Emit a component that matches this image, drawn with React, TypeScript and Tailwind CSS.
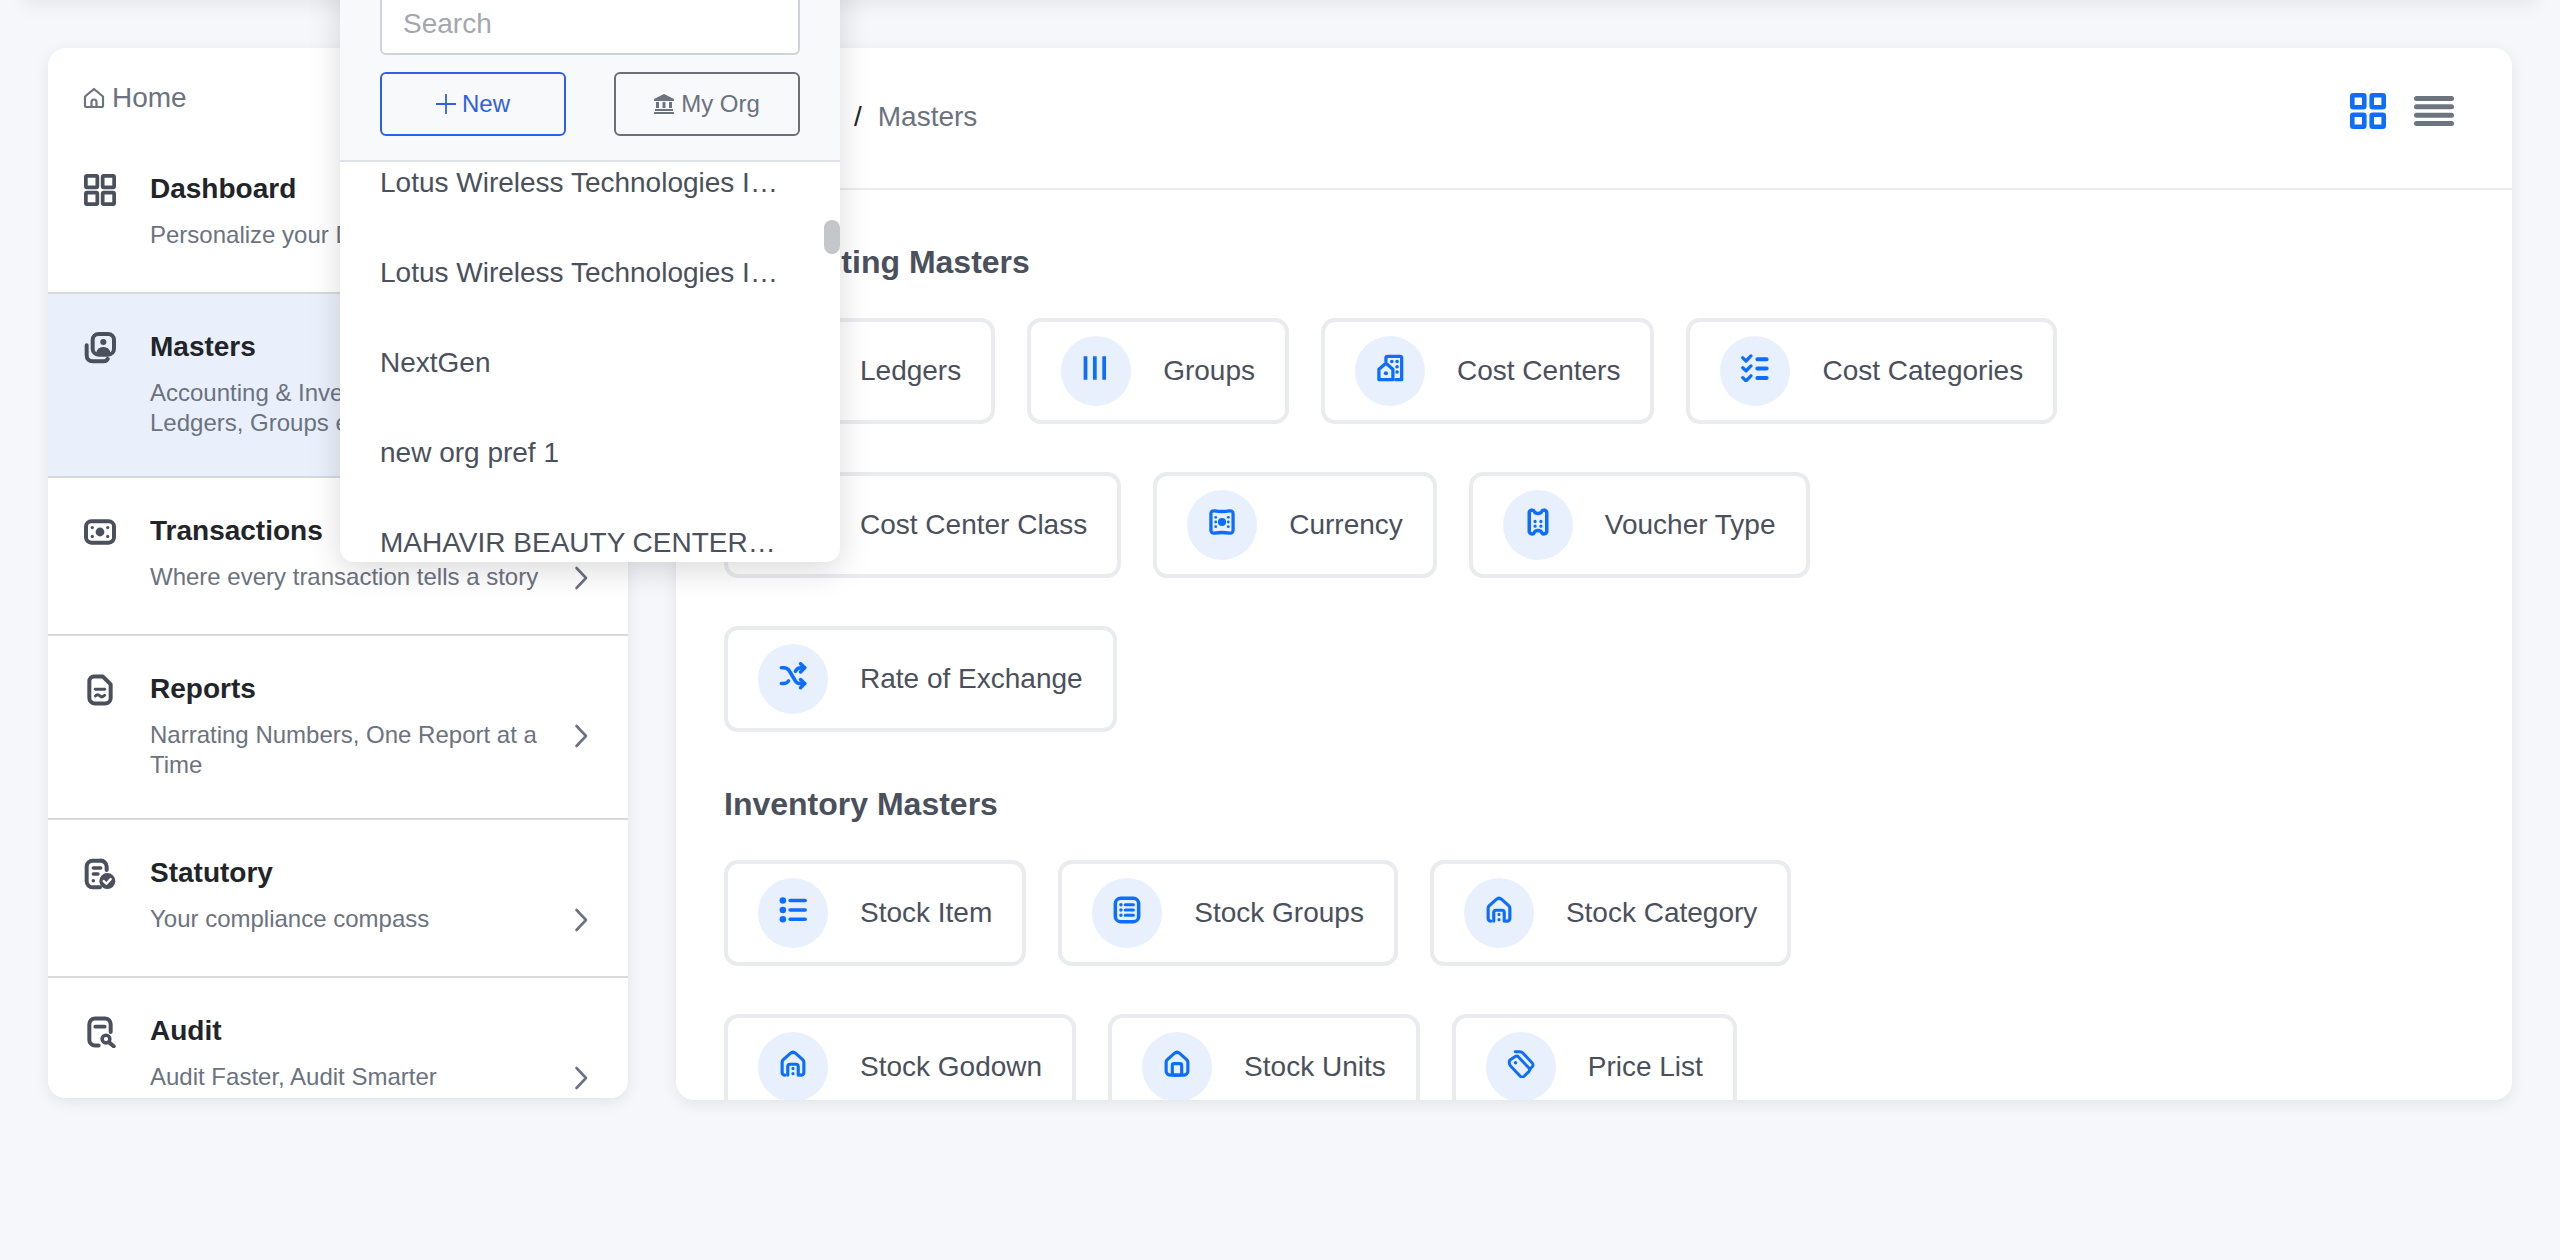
import React from "react";

const F = { fontFamily: '"Liberation Sans", Arial, sans-serif' };

function Svg({ children, cls }: { children: React.ReactNode; cls: string }) {
  return (
    <svg viewBox="0 0 24 24" fill="none" stroke="currentColor" strokeWidth="2" strokeLinecap="round" strokeLinejoin="round" className={cls}>
      {children}
    </svg>
  );
}

const GridIcon = () => (
  <>
    <rect x="1.400" y="1.400" width="8.600" height="8.600" rx="0.800" strokeWidth="2.800" />
    <rect x="14" y="1.400" width="8.600" height="8.600" rx="0.800" strokeWidth="2.800" />
    <rect x="1.400" y="14" width="8.600" height="8.600" rx="0.800" strokeWidth="2.800" />
    <rect x="14" y="14" width="8.600" height="8.600" rx="0.800" strokeWidth="2.800" />
  </>
);

const MastersIcon = () => (
  <>
    <rect x="6.500" y="1.500" width="16" height="15.500" rx="4.500" strokeWidth="3" />
    <circle cx="14.500" cy="7.500" r="2.300" fill="currentColor" stroke="none" />
    <path d="M9.500 16c.6-3 2.700-4.300 5-4.300s4.400 1.300 5 4.300" fill="currentColor" stroke="currentColor" strokeWidth="1" />
    <path d="M2 10v7.500c0 2.800 2 4.500 4.500 4.500h8c1.500 0 2.700-.6 3.300-1.800" strokeWidth="3" />
  </>
);

const CashIcon = () => (
  <>
    <rect x="1.500" y="4" width="21" height="16" rx="4" strokeWidth="3" />
    <circle cx="12" cy="12" r="3.300" fill="currentColor" stroke="none" />
    <circle cx="6.200" cy="8.700" r="1.200" fill="currentColor" stroke="none" />
    <circle cx="6.200" cy="15.300" r="1.200" fill="currentColor" stroke="none" />
    <circle cx="17.800" cy="8.700" r="1.200" fill="currentColor" stroke="none" />
    <circle cx="17.800" cy="15.300" r="1.200" fill="currentColor" stroke="none" />
  </>
);

const ReportIcon = () => (
  <>
    <path d="M7.500 1.800H14l6 6V18a4.200 4.200 0 0 1-4.200 4.200H8.200A4.200 4.200 0 0 1 4 18V5.500a3.700 3.700 0 0 1 3.500-3.700z" strokeWidth="3" />
    <path d="M8.500 11.500h7" strokeWidth="2.200" />
    <path d="M8.500 16.500c1.500-1.500 2.500-1 3.500 0s2 1 3.500-.5" strokeWidth="2.200" />
  </>
);

const StatutoryIcon = () => (
  <>
    <path d="M12 22H6.500A4.500 4.500 0 0 1 2 17.500V6.500A4.500 4.500 0 0 1 6.500 2h5.500A4.500 4.500 0 0 1 17 6.500V9" strokeWidth="3" />
    <path d="M7 7.500h5.500M7 12h3.500" strokeWidth="2.600" />
    <circle cx="7" cy="17" r="1.300" fill="currentColor" stroke="none" />
    <circle cx="17.500" cy="17.300" r="6" fill="currentColor" stroke="none" />
    <path d="M14.800 17.300l2 2 3.200-3.500" stroke="#fff" strokeWidth="1.800" />
  </>
);

const AuditIcon = () => (
  <>
    <path d="M11 22.200H8.200A4.200 4.200 0 0 1 4 18V6a4.200 4.200 0 0 1 4.200-4.200h7.600A4.200 4.200 0 0 1 20 6v6" strokeWidth="3" />
    <path d="M8.500 8h7" strokeWidth="2.800" />
    <circle cx="16.500" cy="17.300" r="2.900" strokeWidth="2.600" />
    <path d="M19 20l3.300 2.700" strokeWidth="3" />
  </>
);

const HouseDoor = () => (
  <>
    <path d="M5 21.500a2.300 2.300 0 0 1-2.300-2.300v-8.700c0-1 .4-1.700 1-2.300l6-5.300c1.300-1.100 3.300-1.100 4.600 0l6 5.300c.6.600 1 1.300 1 2.300v8.700a2.300 2.300 0 0 1-2.300 2.300h-1" strokeWidth="2.700" />
    <path d="M7.500 21.500v-7.300a2 2 0 0 1 2-2h5a2 2 0 0 1 2 2v7.300" strokeWidth="2.700" />
    <path d="M12 15.800v.1M12 20.200v.1" strokeWidth="2.700" />
  </>
);

const HouseBox = () => (
  <>
    <path d="M2.700 18.200v-7.700c0-1 .4-1.700 1-2.300l6-5.300c1.300-1.100 3.300-1.100 4.600 0l6 5.300c.6.600 1 1.300 1 2.300v7.700a3.300 3.300 0 0 1-3.300 3.300H6a3.300 3.300 0 0 1-3.300-3.300z" strokeWidth="2.700" />
    <rect x="8" y="11.700" width="8" height="9.800" rx="1.500" strokeWidth="2.700" />
  </>
);

const icons: Record<string, React.ReactNode> = {
  groups: <path d="M3 2v20M11 2v20M19 2v20" strokeWidth="3.200" strokeLinecap="butt" />,
  centers: (
    <>
      <path d="M8.500 6V3.500A1.500 1.500 0 0 1 10 2h10.500A1.500 1.500 0 0 1 22 3.500V22h-5" strokeWidth="2.800" />
      <path d="M2.500 13L8.500 8l6 5v9h-12z" strokeWidth="2.800" />
      <circle cx="8.500" cy="16.500" r="1.800" fill="currentColor" stroke="none" />
      <path d="M13.500 6.500h.1M18 6.500h.1M18 11h.1M18 15.500h.1" strokeWidth="3" />
    </>
  ),
  categories: (
    <>
      <path d="M1.500 3.300l2.800 2.700 4.200-4.300M1.500 11.800l2.800 2.700 4.200-4.300M1.500 20.300L4.300 23l4.200-4.300" strokeWidth="2.800" />
      <path d="M14 4.500h8M14 12.500h8M14 20.500h8" strokeWidth="3.400" />
    </>
  ),
  currency: (
    <>
      <path d="M2.500 5c0-1.800 1.200-2.800 3-2.500 4.500.7 8.500.7 13 0 1.800-.3 3 .7 3 2.500v14c0 1.800-1.200 2.800-3 2.500-4.500-.7-8.500-.7-13 0-1.800.3-3-.7-3-2.500z" strokeWidth="2.800" />
      <circle cx="12" cy="12" r="3.500" fill="currentColor" stroke="none" />
      <circle cx="6.600" cy="8" r="1.200" fill="currentColor" stroke="none" />
      <circle cx="6.600" cy="12" r="1.200" fill="currentColor" stroke="none" />
      <circle cx="6.600" cy="16" r="1.200" fill="currentColor" stroke="none" />
      <circle cx="17.400" cy="8" r="1.200" fill="currentColor" stroke="none" />
      <circle cx="17.400" cy="12" r="1.200" fill="currentColor" stroke="none" />
      <circle cx="17.400" cy="16" r="1.200" fill="currentColor" stroke="none" />
    </>
  ),
  voucher: (
    <>
      <path d="M4.500 5a2.600 2.600 0 0 1 2.600-3.300c.9 0 1.400.6 1.700 1.300.5 1 1.700 1.700 3.200 1.700s2.700-.7 3.200-1.700c.3-.7.800-1.300 1.700-1.300A2.600 2.600 0 0 1 19.500 5v14a2.600 2.600 0 0 1-2.600 3.300c-.9 0-1.400-.6-1.700-1.300-.5-1-1.700-1.700-3.200-1.700s-2.700.7-3.200 1.700c-.3.700-.8 1.300-1.700 1.300A2.600 2.600 0 0 1 4.500 19z" strokeWidth="3" />
      <path d="M9.500 11.500v.1M14.500 11.500v.1M9.500 15.500v.1M14.500 15.500v.1" strokeWidth="2.800" />
    </>
  ),
  rate: (
    <>
      <path d="M2 5h2c2.200 0 3.800 1 4.800 2.500l5.400 9c1 1.500 2 2 4 2H22" strokeWidth="3" />
      <path d="M2 18.500h2c2.200 0 3.200-.8 4.200-2.300M14 8c1-1.800 2.200-3 4.500-3H22" strokeWidth="3" />
      <path d="M18.500 1.500L22 5l-3.500 3.500M18.500 15L22 18.500 18.500 22" strokeWidth="3" />
    </>
  ),
  item: (
    <>
      <circle cx="3.300" cy="3.800" r="2.800" fill="currentColor" stroke="none" />
      <circle cx="3.300" cy="12" r="2.800" fill="currentColor" stroke="none" />
      <circle cx="3.300" cy="20" r="2.800" fill="currentColor" stroke="none" />
      <path d="M9.500 3.800h13M9.500 12h13M9.500 20h13" strokeWidth="3" />
    </>
  ),
  sgroups: (
    <>
      <rect x="2" y="2" width="20" height="20" rx="4.500" strokeWidth="3" />
      <path d="M10.500 7.500h7M10.500 12h7M10.500 16.500h7" strokeWidth="2.600" />
      <path d="M6.800 7.500v.1M6.800 12v.1M6.800 16.500v.1" strokeWidth="3" />
    </>
  ),
  door: <HouseDoor />,
  box: <HouseBox />,
  tag: (
    <>
      <path d="M2.300 8.800L7 5.600c1-.6 2-.5 2.800.3l9 9.500c.8.900.8 2 .1 2.900l-4.300 4.200c-1 .9-2.300.9-3.200 0l-8.500-9c-1-1.400-1-3.600-.6-4.700z" strokeWidth="2.500" />
      <path d="M7 1.500h4c1 0 1.900.4 2.600 1.100l8 8.500c.8 1 .8 2.400 0 3.300L20 16" strokeWidth="2.500" />
      <circle cx="7.300" cy="11" r="1.500" fill="currentColor" stroke="none" />
    </>
  ),
  ledger: <path d="M5 2h14v20H5z" />,
  cls: <path d="M5 2h14v20H5z" />,
};

function Row({ icon, title, lines, active, last }: { icon: React.ReactNode; title: string; lines: string; active?: boolean; last?: boolean }) {
  return (
    <div className={`flex min-h-[158px] shrink-0 pl-[36px] pr-[40px] pt-[32px] pb-[38px] ${last ? "" : "border-b-2 border-[#d9d9d9]"} ${active ? "bg-[#e9f0fb]" : "bg-white"}`}>
      <div className="w-[66px] shrink-0 pt-[6px] text-[#4a505c]">{icon}</div>
      <div className="flex-1 flex flex-col">
        <div className="h-[42px] leading-[42px] text-[28px] font-bold text-[#212529]">{title}</div>
        <div className="flex items-start justify-between mt-[10px]">
          <div className="w-[396px] text-[24px] leading-[30px] text-[#6b7280]">{lines}</div>
          <svg viewBox="0 0 14 24" fill="none" stroke="#6b7280" strokeWidth="2.600" strokeLinecap="round" strokeLinejoin="round" className="w-[14px] h-[24px] mt-[4px]">
            <path d="M2.500 2l9.500 10-9.500 10" />
          </svg>
        </div>
      </div>
    </div>
  );
}

function Card({ icon, label }: { icon: string; label: string }) {
  return (
    <div className="flex items-center h-[106px] border-4 border-[#e9ebee] rounded-[14px] bg-white pl-[30px] pr-[30px]">
      <div className="w-[70px] h-[70px] rounded-full bg-[#e8effd] flex items-center justify-center text-[#0d6efd]">
        <Svg cls="w-[28px] h-[28px] -mt-[6px]">{icons[icon]}</Svg>
      </div>
      <div className="ml-[32px] text-[28px] leading-[40px] text-[#4a505c] whitespace-nowrap">{label}</div>
    </div>
  );
}

export default function App() {
  return (
    <div style={F} className="relative h-[1260px] w-[2560px] overflow-hidden bg-[#f6f7fb]">
      <div className="absolute left-[24px] right-[24px] -top-[20px] h-[20px] shadow-[0_4px_20px_rgba(0,0,0,0.08)]" />

      <div className="flex gap-[48px] px-[48px] pt-[48px]">
        <aside className="w-[580px] h-[1050px] shrink-0 bg-white rounded-[18px] shadow-[0_4px_16px_rgba(0,0,0,0.08)] overflow-hidden flex flex-col">
          <div className="h-[88px] shrink-0 flex items-center pl-[34px] pt-[12px] text-[28px] text-[#6b7280]">
            <Svg cls="w-[24px] h-[24px] mr-[6px]">
              <path d="M3 20V10.500L12 3l9 7.500V20a1 1 0 0 1-1 1H4a1 1 0 0 1-1-1z" strokeWidth="2.200" />
              <path d="M9.500 21v-5a2.500 2.500 0 0 1 5 0v5" strokeWidth="2.200" />
            </Svg>
            Home
          </div>
          <Row icon={<Svg cls="w-[32px] h-[32px]"><GridIcon /></Svg>} title="Dashboard" lines="Personalize your Dashboard" />
          <Row active icon={<Svg cls="w-[32px] h-[32px]"><MastersIcon /></Svg>} title="Masters" lines="Accounting & Inventory Masters Ledgers, Groups etc" />
          <Row icon={<Svg cls="w-[32px] h-[32px]"><CashIcon /></Svg>} title="Transactions" lines="Where every transaction tells a story" />
          <Row icon={<Svg cls="w-[32px] h-[32px]"><ReportIcon /></Svg>} title="Reports" lines="Narrating Numbers, One Report at a Time" />
          <Row icon={<Svg cls="w-[32px] h-[32px]"><StatutoryIcon /></Svg>} title="Statutory" lines="Your compliance compass" />
          <Row last icon={<Svg cls="w-[32px] h-[32px]"><AuditIcon /></Svg>} title="Audit" lines="Audit Faster, Audit Smarter" />
        </aside>

        <main className="flex-1 h-[1052px] bg-white rounded-[18px] shadow-[0_4px_16px_rgba(0,0,0,0.08)] overflow-hidden flex flex-col">
          <div className="h-[142px] shrink-0 border-b-2 border-[#e9ebee] flex items-center justify-between pl-[48px] pr-[58px]">
            <div className="flex items-center text-[28px] text-[#6b7280] -mt-[2px]">
              <span className="w-[130px]">Home</span>
              <span className="text-[#212529] mr-[16px]">/</span>
              <span>Masters</span>
            </div>
            <div className="flex items-center gap-[28px] -mt-[14px]">
              <svg viewBox="0 0 36 36" className="w-[36px] h-[36px]" fill="none" stroke="#0d6efd" strokeWidth="4.600">
                <rect x="2.300" y="2.300" width="12" height="12" rx="1" />
                <rect x="21.700" y="2.300" width="12" height="12" rx="1" />
                <rect x="2.300" y="21.700" width="12" height="12" rx="1" />
                <rect x="21.700" y="21.700" width="12" height="12" rx="1" />
              </svg>
              <svg viewBox="0 0 40 30" className="w-[40px] h-[30px]" fill="#6c757d">
                <rect x="0" y="0" width="40" height="5" rx="2.500" />
                <rect x="0" y="8.300" width="40" height="5" rx="2.500" />
                <rect x="0" y="16.700" width="40" height="5" rx="2.500" />
                <rect x="0" y="25" width="40" height="5" rx="2.500" />
              </svg>
            </div>
          </div>
          <div className="flex-1 overflow-hidden pl-[48px] pr-[48px]">
            <h2 className="text-[32px] leading-[40px] font-bold text-[#4a505c] mt-[52px] mb-[36px]">Accounting Masters</h2>
            <div className="flex flex-col gap-[48px]">
              <div className="flex gap-[32px]">
                <Card icon="ledger" label="Ledgers" />
                <Card icon="groups" label="Groups" />
                <Card icon="centers" label="Cost Centers" />
                <Card icon="categories" label="Cost Categories" />
              </div>
              <div className="flex gap-[32px]">
                <Card icon="cls" label="Cost Center Class" />
                <Card icon="currency" label="Currency" />
                <Card icon="voucher" label="Voucher Type" />
              </div>
              <div className="flex gap-[32px]">
                <Card icon="rate" label="Rate of Exchange" />
              </div>
            </div>
            <h2 className="text-[32px] leading-[40px] font-bold text-[#4a505c] mt-[52px] mb-[36px]">Inventory Masters</h2>
            <div className="flex flex-col gap-[48px]">
              <div className="flex gap-[32px]">
                <Card icon="item" label="Stock Item" />
                <Card icon="sgroups" label="Stock Groups" />
                <Card icon="door" label="Stock Category" />
              </div>
              <div className="flex gap-[32px]">
                <Card icon="door" label="Stock Godown" />
                <Card icon="box" label="Stock Units" />
                <Card icon="tag" label="Price List" />
              </div>
            </div>
          </div>
        </main>
      </div>

      <div className="absolute left-[340px] -top-[40px] w-[500px] h-[602px] rounded-b-[14px] bg-white overflow-hidden shadow-[0_8px_32px_rgba(0,0,0,0.15)] flex flex-col">
        <div className="h-[202px] shrink-0 bg-[#f8f9fa] border-b-2 border-[#dee2e6] px-[40px] pt-[31px]">
          <div className="h-[64px] bg-white border-2 border-[#ced4da] rounded-[6px] px-[21px] pt-[1px] flex items-center text-[28px] text-[#a3a8ad]">Search</div>
          <div className="flex justify-between mt-[17px]">
            <div className="w-[186px] h-[64px] rounded-[6px] border-2 border-[#2f5fe8] text-[#2f5fe8] flex items-center justify-center text-[24px]">
              <svg viewBox="0 0 20 20" className="w-[20px] h-[20px] mr-[6px]" stroke="currentColor" strokeWidth="1.800" fill="none"><path d="M10 0v20M0 10h20" /></svg>
              New
            </div>
            <div className="w-[186px] h-[64px] rounded-[6px] border-2 border-[#6c6f73] text-[#6b7280] flex items-center justify-center text-[24px]">
              <svg viewBox="0 0 20 20" className="w-[20px] h-[20px] mr-[7px]" fill="currentColor"><path d="M10 0L0 5v2h20V5zM2 8h3v6H2zM8.500 8h3v6h-3zM15 8h3v6h-3zM1 15h18v2H1zM0 18h20v2H0z" /></svg>
              My Org
            </div>
          </div>
        </div>
        <div className="relative flex-1 overflow-hidden">
          <div className="-mt-[24px] px-[40px] text-[28px] text-[#4a505c]">
            {["Lotus Wireless Technologies India Pvt Ltd", "Lotus Wireless Technologies India Private", "NextGen", "new org pref 1", "MAHAVIR BEAUTY CENTER AND SPA"].map((t) => (
              <div key={t} className="h-[90px] flex items-center">
                <span className="block w-[400px] truncate">{t}</span>
              </div>
            ))}
          </div>
          <div className="absolute right-0 top-[58px] w-[16px] h-[34px] rounded-full bg-[#c4c6c9]" />
        </div>
      </div>
    </div>
  );
}
